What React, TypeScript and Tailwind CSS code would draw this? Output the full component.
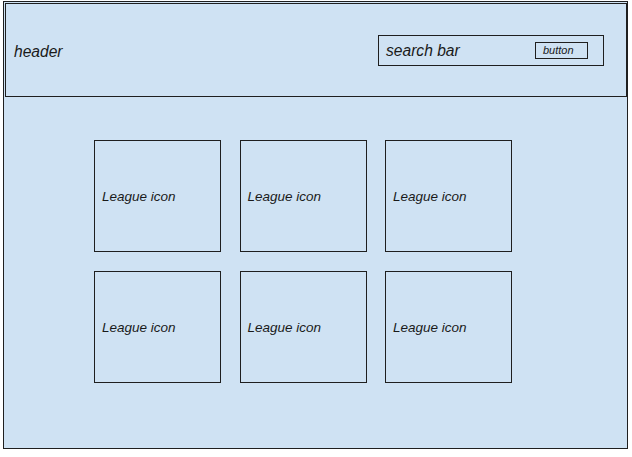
export default function App() {
  const leagues = Array.from({ length: 6 }, (_, i) => i);

  return (
    <div className="w-[632px] h-[457px] bg-white pt-[1px] pl-[3px] font-['Liberation_Sans',Arial,sans-serif] italic text-[#1a1a1a]">
      <div className="w-[625px] h-[448px] border border-[#1f1f1f] bg-[#cfe2f3] flex flex-col">
        {/* header */}
        <div className="mt-[1px] ml-[1px] w-[622px] h-[94px] border border-[#1f1f1f] flex items-center justify-between pl-[8px] pr-[22px]">
          <span className="text-[15.6px] leading-none mt-[3px]">header</span>
          <div className="w-[226px] h-[31px] border border-[#1f1f1f] flex items-center justify-between pl-[7px] pr-[15px]">
            <span className="text-[15.6px] leading-none mt-[2px]">search bar</span>
            <div className="w-[53px] h-[17px] border border-[#1f1f1f] flex items-center pl-[7px] text-[11px] leading-none">
              button
            </div>
          </div>
        </div>

        {/* leagues */}
        <div className="mt-[43px] pl-[90px] grid grid-cols-[127px_127px_127px] gap-x-[18.5px] gap-y-[19px]">
          {leagues.map((i) => (
            <div key={i} className="h-[112px] border border-[#1f1f1f] flex items-center pl-[7px]">
              <span className="text-[13.5px] leading-none mt-[2px]">League icon</span>
            </div>
          ))}
        </div>
      </div>
    </div>
  );
}
